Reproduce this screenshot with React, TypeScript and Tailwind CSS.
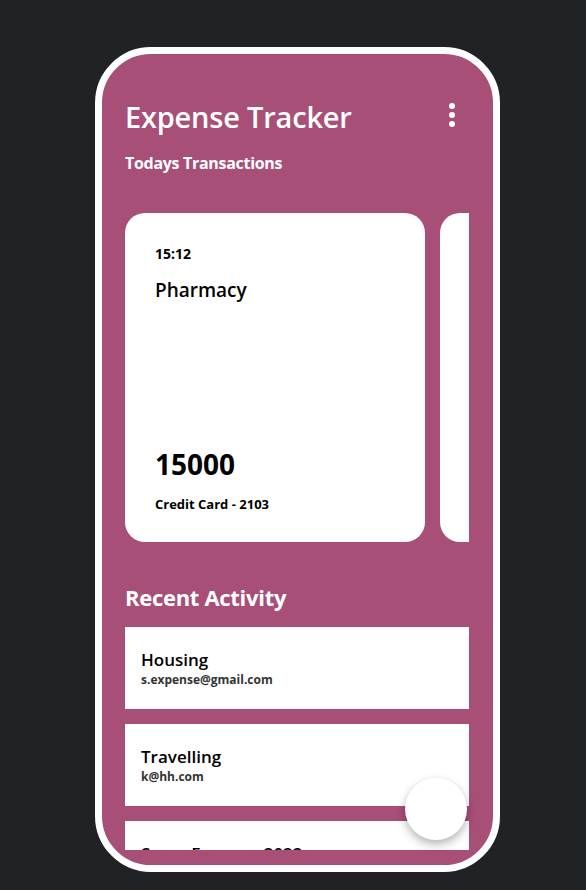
import React from 'react';

const activity = [
  { title: 'Housing', email: 's.expense@gmail.com' },
  { title: 'Travelling', email: 'k@hh.com' },
  { title: 'Some Expense 2022', email: 'a@mail.com' },
];

const App: React.FC = () => {
  return (
    <div
      className="min-h-[890px] w-full bg-[#212226] pt-[47px] flex justify-center"
      style={{ fontFamily: '"Open Sans", "Noto Sans", sans-serif' }}
    >
      <div className="relative w-[405px] h-[825px] ml-[9px] rounded-[56px] border-[7px] border-white bg-[#a74f77] overflow-hidden flex flex-col">
        {/* Header */}
        <div className="pl-[23px] pr-[38px] pt-[45px] flex items-start justify-between">
          <h1 className="text-[29px] leading-[36px] font-semibold text-white tracking-[-0.2px]">Expense Tracker</h1>
          <div className="flex flex-col gap-[3px] pt-[4px]">
            <span className="w-[6px] h-[6px] rounded-full bg-white"></span>
            <span className="w-[6px] h-[6px] rounded-full bg-white"></span>
            <span className="w-[6px] h-[6px] rounded-full bg-white"></span>
          </div>
        </div>
        <h2 className="pl-[23px] mt-[17px] text-[16px] leading-[22px] font-bold text-white tracking-[-0.3px]">Todays Transactions</h2>

        {/* Cards */}
        <div className="ml-[23px] mr-[24px] mt-[39px] flex gap-[15px] overflow-hidden shrink-0">
          <div className="w-[300px] h-[329px] shrink-0 rounded-[20px] bg-white px-[30px] pt-[31px] flex flex-col">
            <span className="text-[14px] leading-[20px] font-bold text-black">15:12</span>
            <span className="mt-[13px] text-[19px] leading-[26px] font-semibold text-black">Pharmacy</span>
            <span className="mt-auto text-[28px] leading-[34px] font-bold text-black">15000</span>
            <span className="mt-[14px] mb-[29px] text-[13px] leading-[18px] font-bold text-black">Credit Card - 2103</span>
          </div>
          <div className="w-[300px] h-[329px] shrink-0 rounded-[20px] bg-white"></div>
        </div>

        {/* Recent activity */}
        <h2 className="pl-[23px] mt-[41px] text-[22px] leading-[28px] font-bold text-white tracking-[-0.3px]">Recent Activity</h2>
        <div className="ml-[23px] mr-[24px] mt-[16px] mb-[15px] flex-1 overflow-hidden flex flex-col gap-[15px]">
          {activity.map((a) => (
            <div key={a.title} className="h-[82px] shrink-0 bg-white px-[16px] pt-[22px]">
              <div className="text-[17px] leading-[22px] font-semibold text-black">{a.title}</div>
              <div className="mt-[1px] text-[12px] leading-[16px] font-bold text-[#333]">{a.email}</div>
            </div>
          ))}
        </div>

        {/* FAB */}
        <div className="absolute left-[303px] top-[724px] w-[62px] h-[62px] rounded-full bg-white shadow-[0_4px_10px_rgba(0,0,0,0.3)]"></div>
      </div>
    </div>
  );
};

export default App;
